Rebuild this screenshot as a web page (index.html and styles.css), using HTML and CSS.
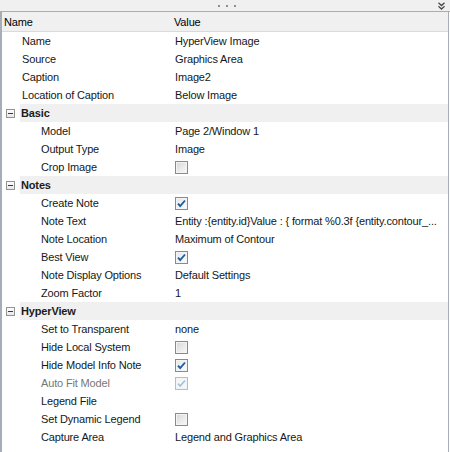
FILE: index.html
```html
<!DOCTYPE html>
<html>
<head>
<meta charset="utf-8">
<link rel="stylesheet" href="styles.css">
</head>
<body>
<div class="panel">
  <div class="topbar">
    <span class="grip"><i></i><i></i><i></i></span>
    <svg class="chev" width="7" height="8" viewBox="0 0 7 8"><path d="M0.5 0.8 L3.5 3.6 L6.5 0.8 M0.5 4.3 L3.5 7.1 L6.5 4.3" fill="none" stroke="#4a4a4a" stroke-width="1.3"/></svg>
  </div>
  <div class="grid">
    <div class="hdr"><span>Name</span><span>Value</span></div>

    <div class="row top"><span class="name">Name</span><span class="val">HyperView Image</span></div>
    <div class="row top"><span class="name">Source</span><span class="val">Graphics Area</span></div>
    <div class="row top"><span class="name">Caption</span><span class="val">Image2</span></div>
    <div class="row top"><span class="name">Location of Caption</span><span class="val">Below Image</span></div>

    <div class="group"><span class="tog"></span><span class="gname">Basic</span></div>
    <div class="row sub"><span class="name">Model</span><span class="val">Page 2/Window 1</span></div>
    <div class="row sub"><span class="name">Output Type</span><span class="val">Image</span></div>
    <div class="row sub"><span class="name">Crop Image</span><span class="val"><span class="cb"></span></span></div>

    <div class="group"><span class="tog"></span><span class="gname">Notes</span></div>
    <div class="row sub"><span class="name">Create Note</span><span class="val"><span class="cb on"><svg width="11" height="11" viewBox="0 0 11 11"><path d="M2 5.6 L4.2 8 L9 2.5" fill="none" stroke="#1d5f9e" stroke-width="1.9"/></svg></span></span></div>
    <div class="row sub"><span class="name">Note Text</span><span class="val">Entity :{entity.id}Value : { format %0.3f {entity.contour_...</span></div>
    <div class="row sub"><span class="name">Note Location</span><span class="val">Maximum of Contour</span></div>
    <div class="row sub"><span class="name">Best View</span><span class="val"><span class="cb on"><svg width="11" height="11" viewBox="0 0 11 11"><path d="M2 5.6 L4.2 8 L9 2.5" fill="none" stroke="#1d5f9e" stroke-width="1.9"/></svg></span></span></div>
    <div class="row sub"><span class="name">Note Display Options</span><span class="val">Default Settings</span></div>
    <div class="row sub"><span class="name">Zoom Factor</span><span class="val">1</span></div>

    <div class="group"><span class="tog"></span><span class="gname">HyperView</span></div>
    <div class="row sub"><span class="name">Set to Transparent</span><span class="val">none</span></div>
    <div class="row sub"><span class="name">Hide Local System</span><span class="val"><span class="cb"></span></span></div>
    <div class="row sub"><span class="name">Hide Model Info Note</span><span class="val"><span class="cb on"><svg width="11" height="11" viewBox="0 0 11 11"><path d="M2 5.6 L4.2 8 L9 2.5" fill="none" stroke="#1d5f9e" stroke-width="1.9"/></svg></span></span></div>
    <div class="row sub dis"><span class="name">Auto Fit Model</span><span class="val"><span class="cb on off"><svg width="11" height="11" viewBox="0 0 11 11"><path d="M2 5.6 L4.2 8 L9 2.5" fill="none" stroke="#9fc3de" stroke-width="1.6"/></svg></span></span></div>
    <div class="row sub"><span class="name">Legend File</span><span class="val"></span></div>
    <div class="row sub"><span class="name">Set Dynamic Legend</span><span class="val"><span class="cb"></span></span></div>
    <div class="row sub"><span class="name">Capture Area</span><span class="val">Legend and Graphics Area</span></div>
  </div>
</div>
</body>
</html>
```
FILE: styles.css
```css
html, body {
  margin: 0;
  padding: 0;
  background: #ffffff;
}
.panel {
  width: 450px;
  height: 452px;
  display: flex;
  flex-direction: column;
  font-family: "Liberation Sans", Arial, sans-serif;
  font-size: 11px;
  letter-spacing: -0.15px;
  color: #141820;
  overflow: hidden;
}
.topbar {
  height: 11px;
  background: #f0f0f0;
  border-bottom: 1px solid #a6adb6;
  display: flex;
  align-items: center;
}
.grip {
  display: flex;
  gap: 6px;
  margin-left: 218px;
}
.grip i {
  display: block;
  width: 2px;
  height: 2px;
  background: #8a8f96;
}
.chev {
  margin-left: auto;
  margin-right: 5px;
}
.grid {
  flex: 1;
  border-left: 2px solid #a6adb6;
  border-right: 1px solid #a6adb6;
  margin-right: 1px;
  background: #fff;
}
.hdr {
  height: 19px;
  background: #f0f0f0;
  border-bottom: 1px solid #dadada;
  display: grid;
  grid-template-columns: 170px 1fr;
  align-items: center;
  padding-left: 2px;
  color: #000;
}
.row {
  height: 18px;
  display: grid;
  grid-template-columns: 173px 1fr;
  align-items: center;
  white-space: nowrap;
}
.row.top .name { padding-left: 20px; }
.row.sub .name { padding-left: 39px; }
.row.dis .name { color: #777; }
.val {
  display: flex;
  align-items: center;
  overflow: hidden;
}
.group {
  height: 18px;
  display: flex;
  align-items: center;
}
.tog {
  width: 9px;
  height: 9px;
  box-sizing: border-box;
  margin-left: 4px;
  border: 1px solid #939393;
  background: linear-gradient(#fdfdfd, #e8e8e8);
  position: relative;
}
.tog::after {
  content: "";
  position: absolute;
  left: 1px;
  top: 3px;
  width: 5px;
  height: 1px;
  background: #3a3a3a;
}
.gname {
  flex: 1;
  height: 18px;
  line-height: 18px;
  margin-left: 5px;
  padding-left: 1px;
  background: #f0f0f0;
  font-weight: bold;
  color: #1b1b1b;
}
.cb {
  width: 13px;
  height: 13px;
  box-sizing: border-box;
  border: 1px solid #888a8c;
  background: linear-gradient(135deg, #d3d5d8 0%, #eceded 60%, #f7f7f7 100%);
  box-shadow: inset 0 0 0 1px #f4f4f4;
  display: flex;
  align-items: center;
  justify-content: center;
}
.cb.on {
  background: linear-gradient(135deg, #e4e6e8 0%, #f4f4f4 60%, #fbfbfb 100%);
}
.cb.off {
  border-color: #bcbcbc;
  background: #f6f6f6;
}
```
